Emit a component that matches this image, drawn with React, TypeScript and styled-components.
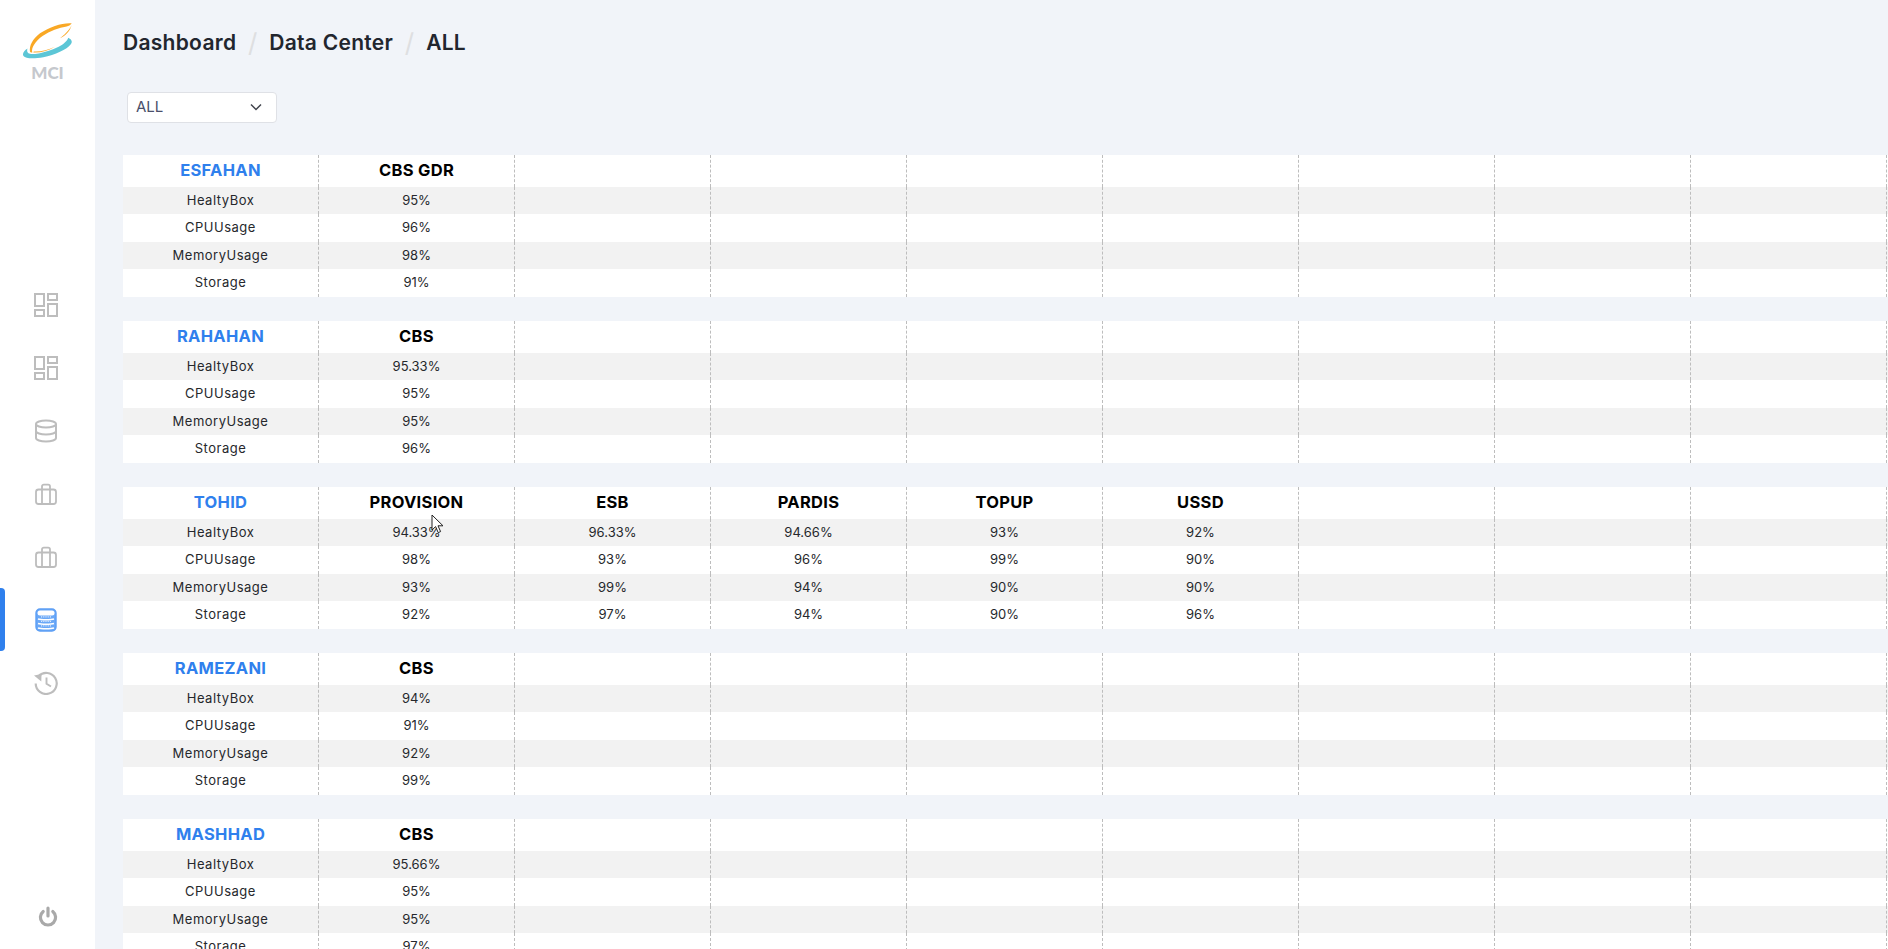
import React from "react";
import styled, { createGlobalStyle } from "styled-components";

const GlobalStyle = createGlobalStyle`
  html, body {
    margin: 0;
    height: 100%;
    overflow: hidden;
    background: #f1f4f9;
    font-family: Inter, "Noto Sans", "Liberation Sans", sans-serif;
  }
`;

const Layout = styled.div`
  display: flex;
  height: 949px;
  overflow: hidden;
  position: relative;
`;

const Sidebar = styled.aside`
  width: 95px;
  flex-shrink: 0;
  background: #fff;
  display: flex;
  flex-direction: column;
  align-items: center;
`;

const Brand = styled.div`
  height: 273px;
  width: 100%;
  padding-top: 22px;
  box-sizing: border-box;
  display: flex;
  flex-direction: column;
  align-items: center;
`;

const BrandName = styled.span`
  font-family: Lato, sans-serif;
  font-weight: 900;
  font-size: 17px;
  line-height: 20px;
  margin-top: 4px;
  color: #c5c8cd;
`;

const Nav = styled.nav`
  width: 100%;
  flex: 1;
`;

const NavItem = styled.div<{ $active?: boolean }>`
  height: 63px;
  padding-right: 3px;
  box-sizing: border-box;
  display: flex;
  align-items: center;
  justify-content: center;
  color: #bdbdbd;
  position: relative;

  &::before {
    content: "";
    display: ${(p) => (p.$active ? "block" : "none")};
    position: absolute;
    left: 0;
    top: 0;
    bottom: 0;
    width: 5px;
    border-radius: 0 4px 4px 0;
    background: #2f80ed;
  }
`;

const PowerWrap = styled.div`
  height: 34px;
  margin-bottom: 16px;
  display: flex;
  align-items: center;
  color: #a9a9a9;
`;

const Main = styled.main`
  flex: 1;
  min-width: 0;
  padding-left: 28px;
`;

const Breadcrumb = styled.div`
  height: 85px;
  padding-bottom: 1px;
  display: flex;
  align-items: center;
  font-size: 21px;
  font-weight: 600;
  letter-spacing: 0.28px;
  color: #22262e;
`;

const Crumb = styled.span``;

const Slash = styled.span`
  width: 33px;
  text-align: center;
  font-weight: 400;
  font-size: 26px;
  color: #dedfe1;
`;

const SelectBox = styled.div`
  width: 150px;
  height: 31px;
  margin-left: 4px;
  margin-top: 6px;
  margin-bottom: 32px;
  padding: 0 14px 2px 8px;
  box-sizing: border-box;
  background: #fff;
  border: 1px solid #dfe1e6;
  border-radius: 4px;
  display: flex;
  align-items: center;
  justify-content: space-between;
  font-size: 15px;
  color: #4a4f6a;
`;

const Section = styled.section`
  display: grid;
  grid-template-rows: 32px 27px 28px 27px 28px;
  margin-bottom: 24px;
  background: #fff;
`;

const Row = styled.div<{ $stripe?: boolean }>`
  display: grid;
  grid-template-columns: repeat(9, 196px);
  background: ${(p) => (p.$stripe ? "#f2f2f2" : "#fff")};
`;

const Cell = styled.div`
  box-sizing: border-box;
  border-right: 1px dashed #bdbdbd;
  padding-bottom: 2px;
  display: flex;
  align-items: center;
  justify-content: center;
  font-size: 13px;
  letter-spacing: 0.5px;
  color: #26282c;
  white-space: nowrap;
`;

const ValueCell = styled(Cell)`
  letter-spacing: 0;
`;

const SiteCell = styled(Cell)`
  font-size: 16.5px;
  font-weight: 700;
  letter-spacing: 0.3px;
  color: #2f80ed;
`;

const ServiceCell = styled(Cell)`
  font-size: 16.5px;
  font-weight: 700;
  letter-spacing: 0.3px;
  color: #000;
`;

const Cursor = styled.svg`
  position: absolute;
  left: 431px;
  top: 514px;
`;

const Dashboard = () => (
  <svg width="24" height="24" viewBox="0 0 24 24" fill="none" stroke="currentColor" strokeWidth="2">
    <rect x="1" y="1" width="9" height="12" />
    <rect x="14" y="1" width="9" height="6" />
    <rect x="1" y="17" width="9" height="6" />
    <rect x="14" y="11" width="9" height="12" />
  </svg>
);

const Database = () => (
  <svg width="24" height="24" viewBox="0 0 24 24" fill="none" stroke="currentColor" strokeWidth="2">
    <ellipse cx="12" cy="5" rx="10" ry="3.6" />
    <path d="M2 5v14c0 2 4.5 3.6 10 3.6s10-1.6 10-3.6V5" />
    <path d="M2 12c0 2 4.5 3.6 10 3.6s10-1.6 10-3.6" />
  </svg>
);

const Briefcase = () => (
  <svg width="24" height="24" viewBox="0 0 24 24" fill="none" stroke="currentColor" strokeWidth="1.8">
    <rect x="2" y="7.500" width="20" height="14.500" rx="2.500" />
    <path d="M8 22V4.500a1.800 1.800 0 0 1 1.800-1.800h4.400a1.800 1.800 0 0 1 1.800 1.800V22" />
  </svg>
);

const Servers = () => (
  <svg width="22" height="24" viewBox="0 0 22 24" fill="none">
    <rect x="1" y="1" width="20" height="22" rx="4" fill="#6aa8f7" stroke="#5d9ff5" strokeWidth="1.400" />
    <rect x="2.500" y="2.500" width="17" height="5" rx="2.500" fill="#fff" />
    <path d="M3 11c3 1 13 1 16 0M3 15.500c3 1 13 1 16 0M3 20c3 1 13 1 16 0" stroke="#fff" strokeWidth="1.500" />
    <path d="M6 8.800h10M6 13.300h10M6 17.800h10" stroke="#dbe9fd" strokeWidth="1.200" strokeDasharray="1.200 1" />
  </svg>
);

const History = () => (
  <svg width="24" height="24" viewBox="0 0 24 24" fill="none" stroke="currentColor" strokeWidth="2.200">
    <path d="M4.600 5.200A10.500 10.500 0 1 1 1.700 12.500" />
    <path d="M0 4.500l7.500-1.500-.2 7.500Z" fill="currentColor" stroke="none" />
    <path d="M12.500 6.500v6.200l4.500 2.800" strokeWidth="1.900" />
  </svg>
);

const Power = () => (
  <svg width="20" height="21" viewBox="0 0 20 21" fill="none" stroke="currentColor" strokeWidth="3.200" strokeLinecap="round">
    <path d="M10 2v8" />
    <path d="M5.200 5.500a7.600 7.600 0 1 0 9.600 0" />
  </svg>
);

const Logo = () => (
  <svg width="50" height="37" viewBox="0 0 50 37" fill="none">
    <path d="M48.700 1.300C40 .5 27 4.500 17 11.300 9.500 17 6 24 7 29.700c.8.800 1.500 1 2.300.8C8 26 12 19.500 19.500 14 27 9 36 5.800 43.700 4.500 45.500 4 47.500 3.200 48.700 1.300Z" fill="#f9a825" />
    <path d="M48.700 2.500c-1 3.500-5 8.500-11.700 13.800 5.500-2.500 10.500-7.500 11.700-13.800Z" fill="#f9a825" />
    <path d="M10.300 30.500c7 .5 15-2 21.700-5.800-7 3-15 5.300-21.200 4.700Z" fill="#f9a825" />
    <path d="M45.300 15.800c3.500 1.700 4.400 4 2.500 6.500C44 27.500 32 33 20.300 35.200 11 37 2.500 36.800.5 34-1 31.500 1 28.800 4.500 26.500c-.8 2.400-.3 4.300 1.500 5 3 1 8 .5 11-.2 6-1.200 12-3.500 17-5.700 4.500-2 10-5.800 11.300-9.800Z" fill="#5cc6d6" />
  </svg>
);

const ChevronDown = () => (
  <svg width="12" height="8" viewBox="0 0 12 8" fill="none" stroke="#40444d" strokeWidth="1.500">
    <path d="M1 1.500l5 5 5-5" />
  </svg>
);

interface Service {
  name: string;
  values: [string, string, string, string];
}

interface Site {
  name: string;
  services: Service[];
}

const metrics = ["HealtyBox", "CPUUsage", "MemoryUsage", "Storage"];

const sites: Site[] = [
  { name: "ESFAHAN", services: [{ name: "CBS GDR", values: ["95%", "96%", "98%", "91%"] }] },
  { name: "RAHAHAN", services: [{ name: "CBS", values: ["95.33%", "95%", "95%", "96%"] }] },
  {
    name: "TOHID",
    services: [
      { name: "PROVISION", values: ["94.33%", "98%", "93%", "92%"] },
      { name: "ESB", values: ["96.33%", "93%", "99%", "97%"] },
      { name: "PARDIS", values: ["94.66%", "96%", "94%", "94%"] },
      { name: "TOPUP", values: ["93%", "99%", "90%", "90%"] },
      { name: "USSD", values: ["92%", "90%", "90%", "96%"] },
    ],
  },
  { name: "RAMEZANI", services: [{ name: "CBS", values: ["94%", "91%", "92%", "99%"] }] },
  { name: "MASHHAD", services: [{ name: "CBS", values: ["95.66%", "95%", "95%", "97%"] }] },
];

const SLOTS = Array.from({ length: 8 }, (_, i) => i);

const SiteTable: React.FC<{ site: Site }> = ({ site }) => (
  <Section>
    <Row>
      <SiteCell>{site.name}</SiteCell>
      {SLOTS.map((i) => (
        <ServiceCell key={i}>{site.services[i]?.name}</ServiceCell>
      ))}
    </Row>
    {metrics.map((metric, m) => (
      <Row key={metric} $stripe={m % 2 === 0}>
        <Cell>{metric}</Cell>
        {SLOTS.map((i) => (
          <ValueCell key={i}>{site.services[i]?.values[m]}</ValueCell>
        ))}
      </Row>
    ))}
  </Section>
);

export default function App() {
  return (
    <Layout>
      <GlobalStyle />
      <Sidebar>
        <Brand>
          <Logo />
          <BrandName>MCI</BrandName>
        </Brand>
        <Nav>
          <NavItem><Dashboard /></NavItem>
          <NavItem><Dashboard /></NavItem>
          <NavItem><Database /></NavItem>
          <NavItem><Briefcase /></NavItem>
          <NavItem><Briefcase /></NavItem>
          <NavItem $active><Servers /></NavItem>
          <NavItem><History /></NavItem>
        </Nav>
        <PowerWrap><Power /></PowerWrap>
      </Sidebar>
      <Main>
        <Breadcrumb>
          <Crumb>Dashboard</Crumb>
          <Slash>/</Slash>
          <Crumb>Data Center</Crumb>
          <Slash>/</Slash>
          <Crumb>ALL</Crumb>
        </Breadcrumb>
        <SelectBox>
          ALL
          <ChevronDown />
        </SelectBox>
        {sites.map((site) => (
          <SiteTable key={site.name} site={site} />
        ))}
      </Main>
      <Cursor width="13" height="20" viewBox="0 0 13 20">
        <path d="M1 1v15l3.600-3.400 2.600 6 2.400-1-2.600-5.800H12Z" fill="#fff" stroke="#222" strokeWidth="1" />
      </Cursor>
    </Layout>
  );
}
